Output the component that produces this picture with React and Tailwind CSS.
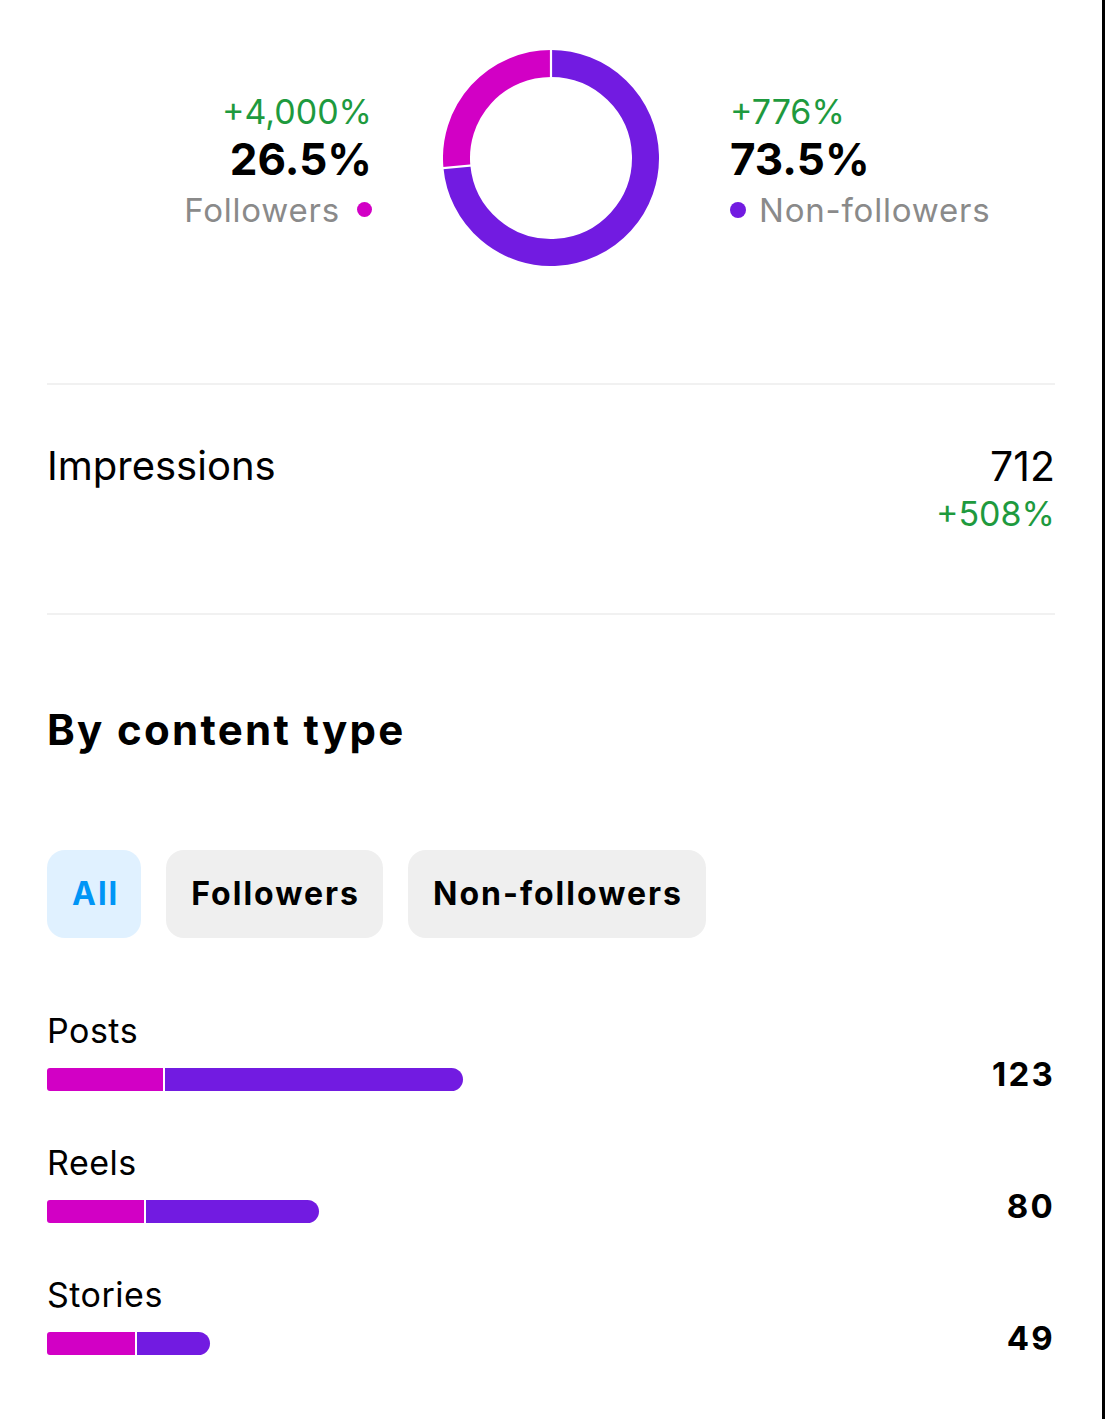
import React from "react";

const MAGENTA = "#d200c5";
const PURPLE = "#721be1";

function Donut() {
  const c = 108;
  const r = 94.5;
  const t = (264.6 * Math.PI) / 180;
  const px = c + r * Math.sin(t);
  const py = c - r * Math.cos(t);
  const ix = c + 79 * Math.sin(t);
  const iy = c - 79 * Math.cos(t);
  const ox = c + 110 * Math.sin(t);
  const oy = c - 110 * Math.cos(t);
  return (
    <svg width="216" height="216" viewBox="0 0 216 216">
      <path d={`M ${c} ${c - r} A ${r} ${r} 0 1 1 ${px} ${py}`} fill="none" stroke={PURPLE} strokeWidth="27" />
      <path d={`M ${px} ${py} A ${r} ${r} 0 0 1 ${c} ${c - r}`} fill="none" stroke={MAGENTA} strokeWidth="27" />
      <line x1={c} y1="-2" x2={c} y2="30" stroke="#fff" strokeWidth="2.2" />
      <line x1={ix} y1={iy} x2={ox} y2={oy} stroke="#fff" strokeWidth="2.2" />
    </svg>
  );
}

function Bar({ label, a, b, value }) {
  return (
    <div className="flex flex-col">
      <div className="text-[34px] leading-[41px] tracking-[0.5px] text-black">{label}</div>
      <div className="h-[23px] flex items-center justify-between mt-[17px]">
        <div className="flex items-center gap-[2px]">
          <div className="h-[23px] rounded-l-[3px]" style={{ width: a, background: MAGENTA }} />
          <div className="h-[23px] rounded-r-full" style={{ width: b, background: PURPLE }} />
        </div>
        <div className="text-[33px] leading-[40px] font-bold tracking-[2.2px] text-black mb-[11px]">{value}</div>
      </div>
    </div>
  );
}

export default function App() {
  return (
    <div className="w-[1105px] min-h-[1419px] bg-white border-r-[3px] border-black font-['Inter',sans-serif]">
      <div className="px-[47px]">
        <div className="pt-[50px] grid grid-cols-[1fr_216px_1fr] gap-x-[71px] items-center">
          <div className="flex flex-col items-end pt-[5px]">
            <div className="text-[34px] leading-[42px] text-[#1e9a3e]">+4,000%</div>
            <div className="text-[44px] leading-[52px] font-bold text-black">26.5%</div>
            <div className="flex items-center gap-[17px] mt-[4px]">
              <span className="text-[33px] leading-[42px] tracking-[0.8px] text-[#8a8a8a]">Followers</span>
              <span className="w-[15px] h-[15px] rounded-full" style={{ background: MAGENTA }} />
            </div>
          </div>
          <Donut />
          <div className="flex flex-col items-start pt-[5px]">
            <div className="text-[34px] leading-[42px] text-[#1e9a3e]">+776%</div>
            <div className="text-[44px] leading-[52px] font-bold text-black">73.5%</div>
            <div className="flex items-center gap-[13px] mt-[4px]">
              <span className="w-[16px] h-[16px] rounded-full" style={{ background: PURPLE }} />
              <span className="text-[33px] leading-[42px] tracking-[0.8px] text-[#8a8a8a]">Non-followers</span>
            </div>
          </div>
        </div>

        <div className="mt-[117px] h-[2px] bg-[#f1f1f1]" />

        <div className="flex justify-between items-start pt-[57px] pb-[79px]">
          <div className="text-[40px] leading-[48px] text-black">Impressions</div>
          <div className="flex flex-col items-end">
            <div className="text-[41px] leading-[48px] text-black">712</div>
            <div className="text-[34px] leading-[40px] text-[#1e9a3e] mt-[4px]">+508%</div>
          </div>
        </div>

        <div className="h-[2px] bg-[#f1f1f1]" />

        <div className="mt-[90px] text-[42px] leading-[50px] font-bold tracking-[2.3px] text-black">By content type</div>

        <div className="mt-[95px] flex gap-[25px]">
          <div className="h-[88px] pl-[25px] pr-[22px] flex items-center rounded-[18px] bg-[#e0f1ff] text-[#0095f6] text-[32px] font-bold tracking-[2px]">All</div>
          <div className="h-[88px] pl-[25px] pr-[23px] flex items-center rounded-[18px] bg-[#efefef] text-black text-[32px] font-bold tracking-[2px]">Followers</div>
          <div className="h-[88px] pl-[25px] pr-[23px] flex items-center rounded-[18px] bg-[#efefef] text-black text-[32px] font-bold tracking-[2px]">Non-followers</div>
        </div>

        <div className="mt-[72px] flex flex-col gap-[51px]">
          <Bar label="Posts" a={116} b={298} value="123" />
          <Bar label="Reels" a={97} b={173} value="80" />
          <Bar label="Stories" a={88} b={73} value="49" />
        </div>
      </div>
    </div>
  );
}
